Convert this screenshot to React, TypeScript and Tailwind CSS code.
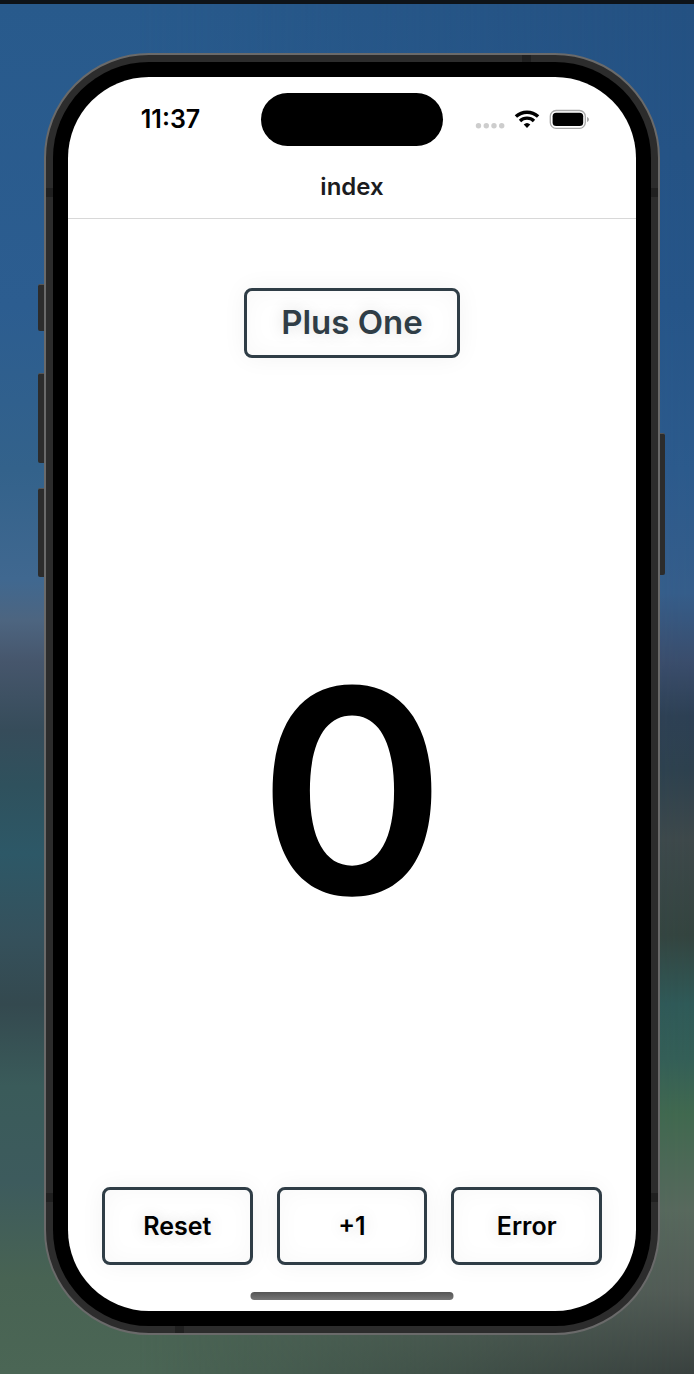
import { useState } from "react";
import type { ReactNode } from "react";

const boxClass =
  "rounded-lg border-[3px] border-[#2f3d46] bg-white shadow-[0_0_24px_rgba(0,0,0,0.05),inset_0_0_24px_rgba(0,0,0,0.03)]";

function ActionButton({ children, onClick }: { children: ReactNode; onClick: () => void }) {
  return (
    <button
      type="button"
      onClick={onClick}
      className={`${boxClass} h-[78px] flex-1 pt-0.5 text-[25px] font-semibold text-black [text-shadow:0_0_16px_rgba(0,0,0,0.15)]`}
    >
      {children}
    </button>
  );
}

function StatusIcons() {
  return (
    <svg width="116" height="22" viewBox="0 1 116 22" aria-hidden="true">
      <g fill="#cdcdcd">
        <circle cx="4.5" cy="17.8" r="2.7" />
        <circle cx="12.3" cy="17.8" r="2.7" />
        <circle cx="20" cy="17.8" r="2.7" />
        <circle cx="27.7" cy="17.8" r="2.7" />
      </g>
      <g fill="none" stroke="#000" strokeWidth="3.4">
        <path d="M41.9 8.6a16.2 16.2 0 0 1 22.2 0" />
        <path d="M46 12.9a10.2 10.2 0 0 1 14 0" />
      </g>
      <path d="M53 20l-3.3-3.5a4.9 4.9 0 0 1 6.6 0z" fill="#000" />
      <rect x="76.3" y="2.5" width="35" height="17.8" rx="5.8" fill="none" stroke="#a8a8a8" strokeWidth="1.3" />
      <rect x="78.6" y="4.7" width="30.6" height="13.4" rx="3.6" fill="#000" />
      <path d="M113 8.9c2.6.8 2.6 4.2 0 5z" fill="#a8a8a8" />
    </svg>
  );
}

export default function App() {
  const [count, setCount] = useState(0);

  return (
    <main className="relative isolate min-h-screen overflow-hidden border-t-4 border-[#0e1318] bg-[linear-gradient(180deg,#285a8c_0%,#2c5d90_22%,#33628b_34%,#406890_42%,#4d6580_45%,#46566c_48%,#364c5a_53%,#2f515d_57%,#2d5867_62%,#35515c_68%,#34494f_73%,#3a5b5a_79%,#3d5b5d_86%,#486353_93%,#4b6655_100%)] pt-[49px] pr-[34px] pb-[39px] pl-11 font-['Inter',sans-serif]">
      <div className="absolute inset-0 -z-10 bg-[linear-gradient(180deg,#245182_0%,#265588_22%,#2c5a8c_34%,#355d8a_43%,#3a4d6c_48%,#2d4054_52%,#2e414e_56%,#3e484a_61%,#34443f_68%,#2f5a58_73%,#345f57_77%,#41694f_81%,#58695d_88%,#525b56_94%,#39413f_100%)] [mask-image:linear-gradient(90deg,transparent_20%,black_100%)]" />

      <span className="absolute top-[280px] left-[38px] h-[47px] w-2 rounded-l-xs border-t border-[#555] bg-[#2c2c2c]" />
      <span className="absolute top-[369px] left-[38px] h-[90px] w-2 rounded-l-xs border-t border-[#555] bg-[#2c2c2c]" />
      <span className="absolute top-[484px] left-[38px] h-[89px] w-2 rounded-l-xs border-t border-[#555] bg-[#2c2c2c]" />
      <span className="absolute top-[429px] right-[29px] h-[142px] w-2 rounded-r-xs border-t border-[#555] bg-[#2c2c2c]" />

      <div className="relative rounded-[105px] border-2 border-[#6a6a6a] bg-[#2c2c2c] p-[7px]">
        <span className="absolute top-0 right-[127px] h-[7px] w-[9px] bg-[#202020]" />
        <span className="absolute bottom-0 left-[129px] h-[7px] w-[9px] bg-[#202020]" />
        <span className="absolute top-[133px] left-0 h-[9px] w-[7px] bg-[#202020]" />
        <span className="absolute top-[133px] right-0 h-[9px] w-[7px] bg-[#202020]" />
        <span className="absolute bottom-[131px] left-0 h-[9px] w-[7px] bg-[#202020]" />
        <span className="absolute right-0 bottom-[131px] h-[9px] w-[7px] bg-[#202020]" />

        <div className="rounded-[96px] bg-black p-[15px]">
          <div className="flex min-h-[1234px] flex-col rounded-[81px] bg-white">
            <header className="border-b border-[#d8d8d8]">
              <div className="grid grid-cols-[1fr_182px_1fr] items-center pt-4">
                <time className="pl-3 text-center text-[25px] font-semibold text-black">11:37</time>
                <div className="h-[53px] rounded-full bg-black" />
                <div className="flex justify-center pr-4">
                  <StatusIcons />
                </div>
              </div>
              <h1 className="pt-[21px] pb-[11px] text-center text-2xl leading-10 font-semibold text-[#1c1c1e]">index</h1>
            </header>

            <section className="flex flex-1 flex-col items-center px-[34px] pt-[69px] pb-[46px]">
              <h2
                className={`${boxClass} flex h-[70px] w-54 items-center justify-center text-[33px] font-semibold text-[#2f3d46] [text-shadow:0_0_16px_rgba(0,0,0,0.15)]`}
              >
                Plus One
              </h2>
              <output className="flex flex-1 items-center pt-9 text-[284px] leading-none font-semibold text-black">
                {count}
              </output>
              <div className="flex w-full gap-6">
                <ActionButton onClick={() => setCount(0)}>Reset</ActionButton>
                <ActionButton onClick={() => setCount((n) => n + 1)}>+1</ActionButton>
                <ActionButton onClick={() => setCount(-1)}>Error</ActionButton>
              </div>
            </section>
            <div className="absolute bottom-[33px] left-1/2 h-2 w-[203px] -translate-x-1/2 rounded-full bg-linear-to-b from-[#555] to-[#777]" />
          </div>
        </div>
      </div>
    </main>
  );
}
